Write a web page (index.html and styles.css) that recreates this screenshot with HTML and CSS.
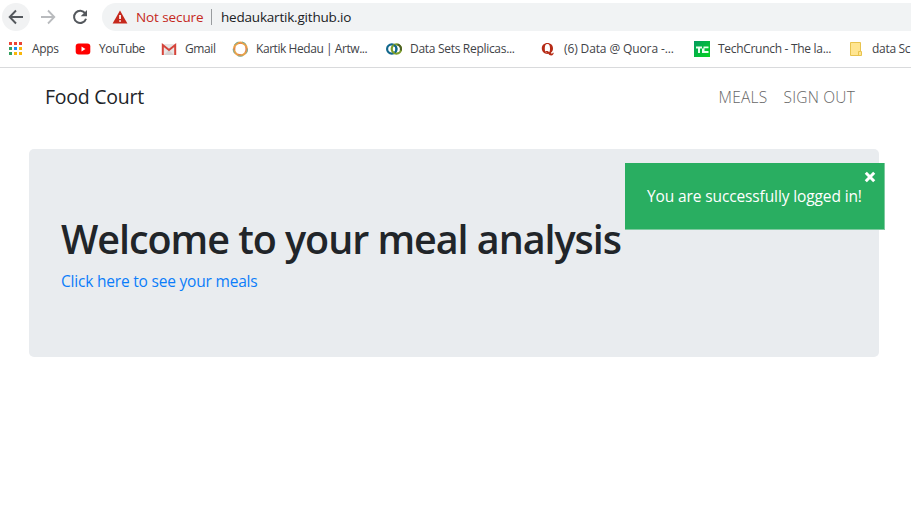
FILE: index.html
```html
<!DOCTYPE html>
<html lang="en">
<head>
<meta charset="utf-8">
<title>Food Court</title>
<link rel="stylesheet" href="styles.css">
</head>
<body>
<header class="browser">
  <div class="toolbar">
    <span class="nav-btn nav-back"><svg width="16" height="16" viewBox="0 0 16 16"><path d="M15 8H2M8 1.5 1.7 8 8 14.5" fill="none" stroke="#54585d" stroke-width="1.9"/></svg></span>
    <span class="nav-btn"><svg width="16" height="16" viewBox="0 0 16 16"><path d="M1 8h13M8 1.5 14.3 8 8 14.5" fill="none" stroke="#b9bbbe" stroke-width="1.8"/></svg></span>
    <span class="nav-btn"><svg width="16" height="16" viewBox="0 0 16 16"><path d="M13.2 4.4A6.1 6.1 0 1 0 14 9.7" fill="none" stroke="#54585d" stroke-width="2"/><path d="M15 1v6.3H8.7z" fill="#54585d"/></svg></span>
    <div class="omnibox">
      <svg width="16" height="14" viewBox="0 0 16 14"><path d="M8 .5 15.4 13.5H.6z" fill="#c5281c"/><path d="M7.2 5h1.7v4H7.2zM7.2 10.2h1.7v1.6H7.2z" fill="#fff"/></svg>
      <span class="insecure">Not secure</span>
      <span class="divider"></span>
      <span class="url">hedaukartik.github.io</span>
    </div>
  </div>
  <nav class="bookmarks">
    <a class="bm bm-apps"><svg width="16" height="16" viewBox="0 0 16 16" shape-rendering="crispEdges"><path d="M1 1h3v3H1zM6 1h3v3H6zM11 1h3v3h-3z" fill="#ea4335"/><path d="M1 6h3v3H1zM1 11h3v3H1z" fill="#34a060"/><path d="M6 6h3v3H6z" fill="#1a8cf0"/><path d="M11 6h3v3h-3zM6 11h3v3H6zM11 11h3v3h-3z" fill="#f9b70b"/></svg><span class="t-apps">Apps</span></a>
    <a class="bm bm-youtube"><svg width="16" height="16" viewBox="0 0 16 16"><rect x=".7" y="2.5" width="14.6" height="11" rx="3" fill="#f00"/><path d="M6.5 5.6v4.8l4-2.4z" fill="#fff"/></svg><span class="t-youtube">YouTube</span></a>
    <a class="bm bm-gmail"><svg width="16" height="16" viewBox="0 0 16 16"><path d="M1 3h14v11H1z" fill="#e8e6e6"/><path d="M3 14l5-5 5 5z" fill="#d5d3d3"/><path d="M1.8 14V4L8 9l6.2-5v10" fill="none" stroke="#d5443a" stroke-width="2"/></svg><span class="t-gmail">Gmail</span></a>
    <a class="bm bm-wide"><svg width="16" height="16" viewBox="0 0 16 16" fill="none"><circle cx="8.4" cy="8" r="6.4" stroke="#e9a248" stroke-width="2.2"/><circle cx="8.4" cy="8" r="7.3" stroke="#60a9a2" stroke-width=".8" stroke-dasharray="5 4"/><circle cx="8.4" cy="8" r="5.6" stroke="#d95852" stroke-width=".6" stroke-dasharray="3 5"/></svg><span class="t-kartik">Kartik Hedau | Artw...</span></a>
    <a class="bm bm-wide"><svg width="16" height="16" viewBox="0 0 16 16" fill="none"><circle cx="5.8" cy="8" r="4.7" stroke="#12678c" stroke-width="2.2"/><circle cx="10.4" cy="8" r="4.7" stroke="#7d9e2b" stroke-width="2.2"/><path d="M8 4A4.7 4.7 0 0 1 9 11.5" stroke="#12678c" stroke-width="1.9"/><path d="M11.5 3.4a4.7 4.7 0 0 1 3.2 6" stroke="#4c5f26" stroke-width="2"/></svg><span class="t-data">Data Sets Replicas...</span></a>
    <a class="bm bm-wide"><svg width="16" height="16" viewBox="0 0 16 16"><path fill-rule="evenodd" d="M7.4 2C10.7 2 13 4.3 13 7.5c0 2-.8 3.4-2.1 4.3.3.6.6.9 1 .9.5 0 .7-.4.8-.9h1c0 1.4-.8 2.6-2.5 2.6-1.4 0-2.2-.6-2.8-1.6-3.7.6-6.6-2-6.6-5.3C1.800 4.300 4.100 2 7.400 2zM7.400 3C5.300 3 4.800 4.800 4.800 7.500s.5 4.500 2.400 4.500c-.4-.7-1-1-1.800-.8V10.300c1.600-.7 2.900-.2 3.800 1 .6-.8.8-2.100.8-3.800C10 4.800 9.500 3 7.400 3z" fill="#b62b16"/></svg><span class="t-quora">(6) Data @ Quora -...</span></a>
    <a class="bm bm-wide"><svg width="16" height="16" viewBox="0 0 16 16"><defs><linearGradient id="tc" x2="1" y2="1"><stop stop-color="#049b60"/><stop offset="1" stop-color="#05d420"/></linearGradient></defs><path d="M0 0h16v16H0z" fill="url(#tc)"/><path d="M2 5.500h6v2H6V12H4V7.500H2zM9.500 5.500h5v1.800h-4V10h4v2H8V7.500h1.500z" fill="#e9fff0"/></svg><span class="t-tech">TechCrunch - The la...</span></a>
    <a class="bm bm-last"><svg width="16" height="16" viewBox="0 0 16 16"><path d="M2.500 1.500h10v9h1v4h-11z" fill="#ffe591" stroke="#e8c34e"/><path d="M10.500 14v-3.500h2" fill="none" stroke="#e8c34e"/></svg><span class="t-folder">data Sc</span></a>
  </nav>
</header>
<nav class="navbar">
  <a class="brand">Food Court</a>
  <div class="links"><a class="meals">MEALS</a><a class="signout">SIGN OUT</a></div>
</nav>
<main class="jumbotron">
  <h1>Welcome to your meal analysis</h1>
  <a class="cta">Click here to see your meals</a>
</main>
<aside class="toast">
  <svg class="close" width="12" height="12" viewBox="0 0 12 12"><path d="M1.800 1.800l8.400 8.400M10.200 1.800l-8.400 8.400" stroke="#fff" stroke-width="3"/></svg>
  <span class="message">You are successfully logged in!</span>
</aside>
</body>
</html>
```
FILE: styles.css
```css
* { box-sizing: border-box; }
body {
  margin: 0;
  width: 911px;
  height: 506px;
  overflow: hidden;
  background: #fff;
  color: #212529;
  font-family: "Open Sans", "Noto Sans", sans-serif;
  white-space: nowrap;
}
svg { display: block; flex: none; }
.browser { height: 68px; border-bottom: 1px solid #d9dadc; }
.toolbar { display: flex; padding: 3px 0 0 2px; height: 31px; gap: 4px; }
.nav-btn { width: 28px; height: 28px; border-radius: 50%; display: flex; align-items: center; justify-content: center; }
.nav-back { background: #f1f2f3; }
.omnibox {
  flex: 1;
  height: 28px;
  margin-left: 4px;
  padding-left: 10px;
  display: flex;
  align-items: center;
  background: #f1f3f4;
  border-radius: 14px 0 0 14px;
  font-size: 13.5px;
}
.insecure { width: 75px; margin-left: 8px; color: #c5281c; letter-spacing: -.1px; }
.divider { width: 1px; height: 16px; background: #999c9f; }
.url { margin-left: 9px; color: #202124; letter-spacing: -.2px; }
.bookmarks { display: flex; height: 36px; padding-left: 8px; align-items: center; font-size: 12px; color: #3f4347; }
.bm { flex: none; display: flex; align-items: center; gap: 8px; }
.bm span { position: relative; top: -1px; }
.bm-apps { width: 67px; }
.bm-youtube { width: 86px; }
.bm-gmail { width: 71px; }
.bm-wide { width: 154px; }
.t-apps { letter-spacing: -.3px; }
.t-youtube { letter-spacing: -.5px; }
.t-gmail { letter-spacing: -.4px; }
.t-kartik { letter-spacing: -.44px; }
.t-data, .t-tech, .t-folder { letter-spacing: -.3px; }
.t-quora { letter-spacing: -.12px; }
.navbar { display: flex; align-items: center; justify-content: space-between; height: 57px; padding: 0 56px 0 45px; }
.brand { font-size: 19.5px; letter-spacing: -.25px; }
.links { display: flex; gap: 16px; font-size: 15.5px; font-weight: 300; color: #666; }
.meals { letter-spacing: .25px; }
.signout { letter-spacing: .2px; }
.jumbotron { width: 850px; height: 208px; margin: 24px 0 0 29px; padding: 66px 32px 0; background: #e9ecef; border-radius: 5px; }
h1 { margin: 0 0 6px; font-size: 39.5px; line-height: 48px; font-weight: 600; letter-spacing: -1.05px; }
.cta { display: block; font-size: 15.5px; line-height: 24px; color: #0b7dfa; letter-spacing: -.2px; }
.toast {
  position: absolute;
  left: 625px;
  top: 163px;
  width: 260px;
  height: 67px;
  padding: 0 22px;
  display: flex;
  align-items: center;
  background: #29ae61;
  border: solid #7fcaa0;
  border-width: 0 1px 1px 0;
  color: #fff;
}
.close { position: absolute; top: 8px; right: 8px; }
.message { font-size: 15.5px; letter-spacing: -.12px; }
```
